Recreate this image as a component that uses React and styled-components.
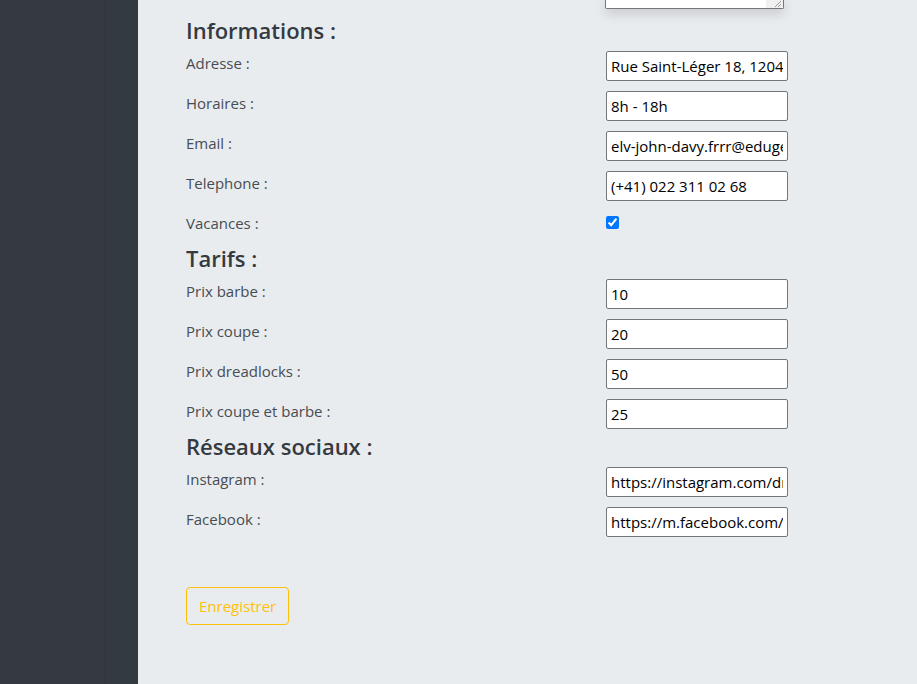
import React from 'react'
import styled, { createGlobalStyle } from 'styled-components'

const GlobalStyle = createGlobalStyle`
  html, body {
    margin: 0;
    padding: 0;
    height: 100%;
    background: #e9ecef;
    font-family: "Open Sans", "Noto Sans", sans-serif;
  }
  #root {
    height: 100%;
  }
`

const Page = styled.div`
  display: flex;
  height: 684px;
  overflow: hidden;
`

const Sidebar = styled.aside`
  width: 138px;
  flex-shrink: 0;
  background: linear-gradient(to right, #353a42 0, #353a42 104px, #33383f 104px, #33383f 107px, #343a41 107px);
`

const Main = styled.main`
  flex: 1;
  background: #e9ecef;
  padding-left: 48px;
`

const TopArea = styled.div`
  height: 9px;
  display: grid;
  grid-template-columns: 419px 179px;
  align-items: end;
`

const NoteBox = styled.div`
  grid-column: 2;
  height: 9px;
  box-sizing: border-box;
  background: #fff;
  border: 1px solid #767676;
  border-top: none;
  border-radius: 0 0 2px 2px;
  box-shadow: 0 4px 12px rgba(0, 0, 0, 0.18);
  display: flex;
  justify-content: flex-end;
`

const ScrollTrack = styled.div`
  width: 17px;
  background: #f0f0f0;
  position: relative;

  &::after {
    content: "";
    position: absolute;
    right: 2px;
    bottom: 1px;
    width: 6px;
    height: 6px;
    background: linear-gradient(135deg, transparent 45%, #999 45%, #999 55%, transparent 55%, transparent 70%, #999 70%, #999 80%, transparent 80%);
  }
`

const Section = styled.section`
  display: flex;
  flex-direction: column;
  margin-top: ${p => p.$first ? '7px' : '3px'};
`

const Heading = styled.h4`
  margin: 0 0 7px;
  font-size: 22px;
  line-height: 28px;
  font-weight: 600;
  color: #343a40;
`

const Rows = styled.div`
  display: flex;
  flex-direction: column;
  gap: 10px;
`

const Row = styled.div`
  display: grid;
  grid-template-columns: 420px 182px;
  height: 30px;
`

const Label = styled.label`
  font-size: 15px;
  line-height: 24px;
  color: #474d53;
`

const Field = styled.input`
  width: 182px;
  height: 30px;
  box-sizing: border-box;
  border: 1px solid #767676;
  border-radius: 2px;
  padding: 0 4px;
  font-family: "Open Sans", "Noto Sans", sans-serif;
  font-size: 15px;
  color: #000;
  background: #fff;
  outline: none;
`

const Check = styled.input`
  margin: 5px 0 0;
  width: 13px;
  height: 13px;
  accent-color: #0075ff;
`

const SaveButton = styled.button`
  margin-top: 50px;
  align-self: flex-start;
  height: 38px;
  padding: 0 12px;
  border: 1px solid #ffc107;
  border-radius: 4px;
  background: transparent;
  color: #ffc107;
  font-family: "Open Sans", "Noto Sans", sans-serif;
  font-size: 15px;
  cursor: pointer;
`

const Form = styled.form`
  display: flex;
  flex-direction: column;
`

const sections = [
  {
    title: 'Informations :',
    rows: [
      { label: 'Adresse :', value: 'Rue Saint-Léger 18, 1204 Genève' },
      { label: 'Horaires :', value: '8h - 18h' },
      { label: 'Email :', value: 'elv-john-davy.frrr@edugeo.ch' },
      { label: 'Telephone :', value: '(+41) 022 311 02 68' },
      { label: 'Vacances :', check: true },
    ],
  },
  {
    title: 'Tarifs :',
    rows: [
      { label: 'Prix barbe :', value: '10' },
      { label: 'Prix coupe :', value: '20' },
      { label: 'Prix dreadlocks :', value: '50' },
      { label: 'Prix coupe et barbe :', value: '25' },
    ],
  },
  {
    title: 'Réseaux sociaux :',
    rows: [
      { label: 'Instagram :', value: 'https://instagram.com/dreadlock_barber' },
      { label: 'Facebook :', value: 'https://m.facebook.com/barber' },
    ],
  },
]

const App = () => {
  return (
    <Page>
      <GlobalStyle />
      <Sidebar />
      <Main>
        <TopArea>
          <NoteBox>
            <ScrollTrack />
          </NoteBox>
        </TopArea>
        <Form onSubmit={e => e.preventDefault()}>
          {sections.map((s, i) => (
            <Section key={s.title} $first={i === 0}>
              <Heading>{s.title}</Heading>
              <Rows>
                {s.rows.map(r => (
                  <Row key={r.label}>
                    <Label>{r.label}</Label>
                    {r.check
                      ? <Check type="checkbox" defaultChecked />
                      : <Field type="text" defaultValue={r.value} />}
                  </Row>
                ))}
              </Rows>
            </Section>
          ))}
          <SaveButton type="submit">Enregistrer</SaveButton>
        </Form>
      </Main>
    </Page>
  )
}

export default App
